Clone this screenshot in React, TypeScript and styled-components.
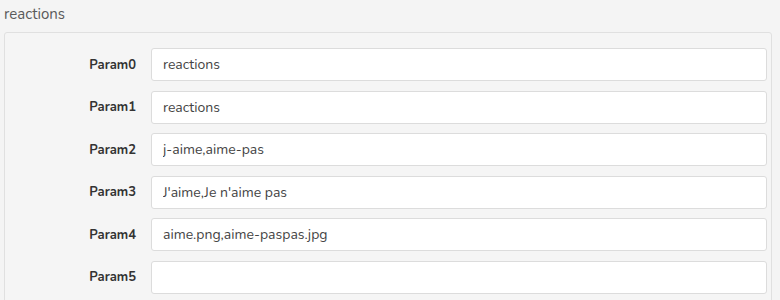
import React from "react";
import styled, { createGlobalStyle } from "styled-components";

const Global = createGlobalStyle`
  html, body { margin: 0; padding: 0; background: #f4f4f4; }
  body { font-family: "Nunito", "Lato", "Open Sans", sans-serif; }
`;

const Page = styled.div`
  padding: 4px 8px 0 4px;
  width: 780px;
  box-sizing: border-box;
`;

const Title = styled.div`
  font-size: 15px;
  color: #5a5a5a;
  height: 28px;
  line-height: 20px;
`;

const Panel = styled.div`
  background: #f5f5f5;
  border: 1px solid #e0e0e0;
  border-radius: 3px;
  padding: 15px 4px 8px 0;
  display: flex;
  flex-direction: column;
  gap: 9.6px;
`;

const Row = styled.div`
  display: grid;
  grid-template-columns: 131px 1fr;
  column-gap: 15px;
  align-items: center;
`;

const Label = styled.label`
  text-align: right;
  font-weight: 700;
  font-size: 13px;
  color: #333;
`;

const Input = styled.input`
  height: 33px;
  box-sizing: border-box;
  border: 1px solid #dcdcdc;
  border-radius: 3px;
  background: #fff;
  padding: 0 11px;
  font-family: inherit;
  font-size: 14px;
  color: #444;
  outline: none;
`;

const params = [
  "reactions",
  "reactions",
  "j-aime,aime-pas",
  "J'aime,Je n'aime pas",
  "aime.png,aime-paspas.jpg",
  "",
];

export default function App() {
  return (
    <>
      <Global />
      <Page>
        <Title>reactions</Title>
        <Panel>
          {params.map((v, i) => (
            <Row key={i}>
              <Label>Param{i}</Label>
              <Input defaultValue={v} readOnly />
            </Row>
          ))}
        </Panel>
      </Page>
    </>
  );
}
